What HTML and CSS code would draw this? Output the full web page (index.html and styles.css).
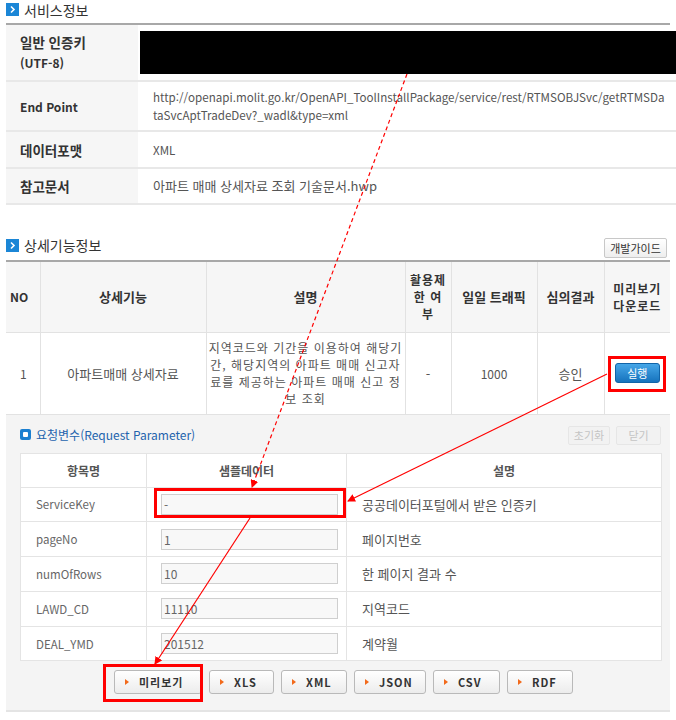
FILE: index.html
```html
<!DOCTYPE html>
<html lang="ko">
<head>
<meta charset="utf-8">
<title>서비스정보</title>
<link rel="stylesheet" href="styles.css">
</head>
<body>
<div class="page">
  <div class="sec-head first">
    <h2 class="sec-title"><span class="sec-ico"><svg width="13" height="13" viewBox="0 0 13 13"><path d="M5 3.5 L8 6.5 L5 9.5" fill="none" stroke="#fff" stroke-width="1.6"/></svg></span>서비스정보</h2>
  </div>
  <table class="info">
    <tr class="r1"><th>일반 인증키<br><span class="lat">(UTF-8)</span></th><td class="keycell"><div class="mask"></div></td></tr>
    <tr class="r2"><th><span class="lat">End Point</span></th><td class="lat-td">http://openapi.molit.go.kr/OpenAPI_ToolInstallPackage/service/rest/RTMSOBJSvc/getRTMSDa<br>taSvcAptTradeDev?_wadl&amp;type=xml</td></tr>
    <tr class="r3"><th>데이터포맷</th><td class="lat-td">XML</td></tr>
    <tr class="r4"><th>참고문서</th><td>아파트 매매 상세자료 조회 기술문서.hwp</td></tr>
  </table>

  <div class="sec-head second">
    <h2 class="sec-title"><span class="sec-ico"><svg width="13" height="13" viewBox="0 0 13 13"><path d="M5 3.5 L8 6.5 L5 9.5" fill="none" stroke="#fff" stroke-width="1.6"/></svg></span>상세기능정보</h2>
    <button class="guide-btn">개발가이드</button>
  </div>
  <table class="detail">
    <colgroup><col class="c1"><col class="c2"><col class="c3"><col class="c4"><col class="c5"><col class="c6"><col class="c7"></colgroup>
    <tr class="dh"><th class="lat">NO</th><th>상세기능</th><th>설명</th><th class="multi">활용제<br>한 여<br>부</th><th>일일 트래픽</th><th>심의결과</th><th class="multi">미리보기<br>다운로드</th></tr>
    <tr class="db"><td class="lat">1</td><td class="ctr">아파트매매 상세자료</td><td class="ctr desc">지역코드와 기간을 이용하여 해당기<br>간, 해당지역의 아파트 매매 신고자<br>료를 제공하는 아파트 매매 신고 정<br>보 조회</td><td class="ctr">-</td><td class="ctr lat">1000</td><td class="ctr">승인</td><td class="ctr"><button class="run-btn">실행</button></td></tr>
  </table>

  <div class="panel">
    <div class="panel-head">
      <h3 class="panel-title"><span class="p-ico"></span>요청변수(Request Parameter)</h3>
      <div class="panel-tools"><button class="faded">초기화</button><button class="faded">닫기</button></div>
    </div>
    <table class="params">
      <colgroup><col class="pc1"><col class="pc2"><col class="pc3"></colgroup>
      <tr class="ph"><th>항목명</th><th>샘플데이터</th><th>설명</th></tr>
      <tr><td class="pn">ServiceKey</td><td><div class="inp">-</div></td><td class="pd">공공데이터포털에서 받은 인증키</td></tr>
      <tr><td class="pn">pageNo</td><td><div class="inp">1</div></td><td class="pd">페이지번호</td></tr>
      <tr><td class="pn">numOfRows</td><td><div class="inp">10</div></td><td class="pd">한 페이지 결과 수</td></tr>
      <tr><td class="pn">LAWD_CD</td><td><div class="inp">11110</div></td><td class="pd">지역코드</td></tr>
      <tr><td class="pn">DEAL_YMD</td><td><div class="inp">201512</div></td><td class="pd">계약월</td></tr>
    </table>
    <div class="btns">
      <button class="dl w-pre"><span class="tri"></span>미리보기</button>
      <button class="dl w-xls"><span class="tri"></span>XLS</button>
      <button class="dl w-xml"><span class="tri"></span>XML</button>
      <button class="dl w-json"><span class="tri"></span>JSON</button>
      <button class="dl w-csv"><span class="tri"></span>CSV</button>
      <button class="dl w-rdf"><span class="tri"></span>RDF</button>
    </div>
  </div>

  <svg class="annot" width="676" height="720" viewBox="0 0 676 720">
    <defs>
      <marker id="ah" markerWidth="8" markerHeight="8" refX="7" refY="4" orient="auto" markerUnits="userSpaceOnUse">
        <path d="M0 0 L8 4 L0 8 Z" fill="#f00"/>
      </marker>
    </defs>
    <rect x="609.5" y="357.5" width="55" height="33" fill="none" stroke="#f00" stroke-width="3"/>
    <rect x="155.5" y="489.5" width="189" height="27" fill="none" stroke="#f00" stroke-width="3"/>
    <rect x="104.5" y="665.5" width="97" height="35" fill="none" stroke="#f00" stroke-width="3"/>
    <line x1="407" y1="74" x2="252" y2="487" stroke="#f00" stroke-width="1.2" stroke-dasharray="4 3" marker-end="url(#ah)"/>
    <line x1="607" y1="374" x2="348" y2="501" stroke="#f00" stroke-width="1.2" marker-end="url(#ah)"/>
    <line x1="250" y1="518" x2="155" y2="664" stroke="#f00" stroke-width="1.2" marker-end="url(#ah)"/>
  </svg>
</div>
</body>
</html>
```
FILE: styles.css
```css
* { box-sizing: border-box; }
html, body { margin: 0; padding: 0; background: #fff; }
body {
  font-family: "Noto Sans CJK KR", "Noto Sans", sans-serif;
  font-size: 13px;
  color: #555;
}
.page { position: relative; width: 676px; height: 720px; padding: 0 6px; overflow: hidden; }

.sec-head { display: flex; align-items: center; justify-content: space-between; width: 664px; border-bottom: 2px solid #a8a8a8; }
.sec-head.first { height: 25px; padding-bottom: 4px; }
.sec-head.second { height: 28px; margin-top: 29px; padding-bottom: 1px; align-items: flex-end; }
.sec-title { margin: 0; display: flex; align-items: center; gap: 5px; font-size: 14px; font-weight: 400; color: #333; line-height: 18px; }
.second .sec-title { margin-bottom: 5px; }
.sec-ico { display: inline-block; width: 13px; height: 13px; background: #1b86d6; }
.sec-ico svg { display: block; }
.guide-btn {
  font: 11px "Noto Sans CJK KR", sans-serif; color: #333;
  width: 63px; height: 20px; padding: 0; margin: 0 3px 1px 0;
  border: 1px solid #c8c8c8; border-radius: 2px;
  background: linear-gradient(#fff, #eee);
}

table { border-collapse: collapse; }
.lat { font-size: 12px; }
.info { width: 670px; }
.info th, .info td { border-bottom: 2px solid #e8e8e8; padding: 0; text-align: left; vertical-align: middle; }
.info th { width: 132px; background: #f6f6f6; color: #333; font-weight: 700; font-size: 13.5px; padding-left: 14px; line-height: 20px; }
.info td { padding-left: 15px; color: #555; line-height: 18px; font-size: 13px; }
.info td.lat-td { font-size: 11.6px; }
.info .r1 th, .info .r1 td { height: 56px; }
.info .r2 th, .info .r2 td { height: 50px; }
.info .r3 th, .info .r3 td { height: 37px; }
.info .r4 th, .info .r4 td { height: 36px; }
.info td.keycell { padding-left: 2px; }
.mask { height: 43px; background: #000; }

.detail { width: 664px; table-layout: fixed; }
.c1 { width: 34px; } .c2 { width: 166px; } .c3 { width: 199px; } .c4 { width: 46px; }
.c5 { width: 86px; } .c6 { width: 67px; } .c7 { width: 66px; }
.detail th, .detail td { border-left: 1px solid #e2e2e2; border-bottom: 1px solid #e2e2e2; padding: 0; }
.detail th:first-child, .detail td:first-child { border-left: none; }
.dh th { height: 70px; background: #f6f6f6; color: #333; font-weight: 700; font-size: 13px; line-height: 17px; text-align: center; }
.dh th.multi { font-size: 12px; letter-spacing: 1px; }
.dh th.lat { font-size: 12px; }
.dh th:first-child { text-align: left; padding-left: 4px; }
.db td { height: 82px; color: #555; font-size: 13px; line-height: 17px; }
.db td.desc { font-size: 12px; letter-spacing: 1px; }
.db td.lat { font-size: 12px; }
.db td:first-child { padding-left: 14px; }
.db td.ctr { text-align: center; }
.run-btn {
  font: 11px "Noto Sans CJK KR", sans-serif; color: #fff;
  width: 45px; height: 20px; padding: 0;
  border: 1px solid #1164a8; border-radius: 3px;
  background: linear-gradient(#45a6e8, #1673bd);
}

.panel { width: 664px; background: #f4f4f4; border-bottom: 2px solid #e4e4e4; padding: 0 9px 16px 14px; }
.panel-head { height: 38px; display: flex; align-items: center; justify-content: space-between; padding-top: 2px; }
.panel-title { margin: 0; display: flex; align-items: center; gap: 5px; font-size: 12px; font-weight: 400; color: #2363ad; }
.p-ico { display: inline-block; width: 11px; height: 11px; border-radius: 2px; background: #1a7fd0; position: relative; }
.p-ico::after { content: ""; position: absolute; left: 3px; top: 3px; width: 5px; height: 5px; background: #fff; border-radius: 1px; }
.panel-tools { display: flex; gap: 6px; margin-top: 1px; }
.faded { font: 11px "Noto Sans CJK KR", sans-serif; color: #c4c4c4; height: 19px; padding: 0; border: 1px solid #e6e6e6; border-radius: 2px; background: #f2f2f2; }
.faded:first-child { width: 42px; }
.faded:last-child { width: 45px; }

.params { width: 641px; table-layout: fixed; background: #fff; }
.pc1 { width: 126px; } .pc2 { width: 200px; } .pc3 { width: 315px; }
.params th, .params td { border: 1px solid #e4e4e4; padding: 0; height: 34.8px; }
.params .ph th { height: 34px; font-weight: 700; color: #555; font-size: 12px; text-align: center; }
.pn { padding-left: 15px !important; color: #666; font-size: 11.5px; }
.pd { padding-left: 15px !important; color: #555; font-size: 13px; }
.inp { margin-left: 14px; width: 177px; height: 21px; border: 1px solid #cfcfcf; background: #f8f8f8; font-size: 12px; line-height: 19px; padding-left: 2px; color: #666; }

.btns { display: flex; justify-content: center; gap: 7px; margin-top: 9px; padding-left: 6px; }
.dl {
  display: flex; align-items: center; justify-content: flex-start; gap: 10px;
  height: 24px; padding: 0 0 0 10px;
  font: 700 11px "Noto Sans CJK KR", sans-serif; color: #333; letter-spacing: 1px;
  border: 1px solid #b9b9b9; border-radius: 3px;
  background: linear-gradient(#fff, #ececec);
}
.tri { width: 0; height: 0; border-left: 4px solid #f26a1b; border-top: 3.5px solid transparent; border-bottom: 3.5px solid transparent; }
.w-pre { width: 88px; } .w-xls { width: 65px; } .w-xml { width: 66px; }
.w-json { width: 72px; } .w-csv { width: 67px; } .w-rdf { width: 66px; }

.annot { position: absolute; left: 0; top: 0; pointer-events: none; }
```
